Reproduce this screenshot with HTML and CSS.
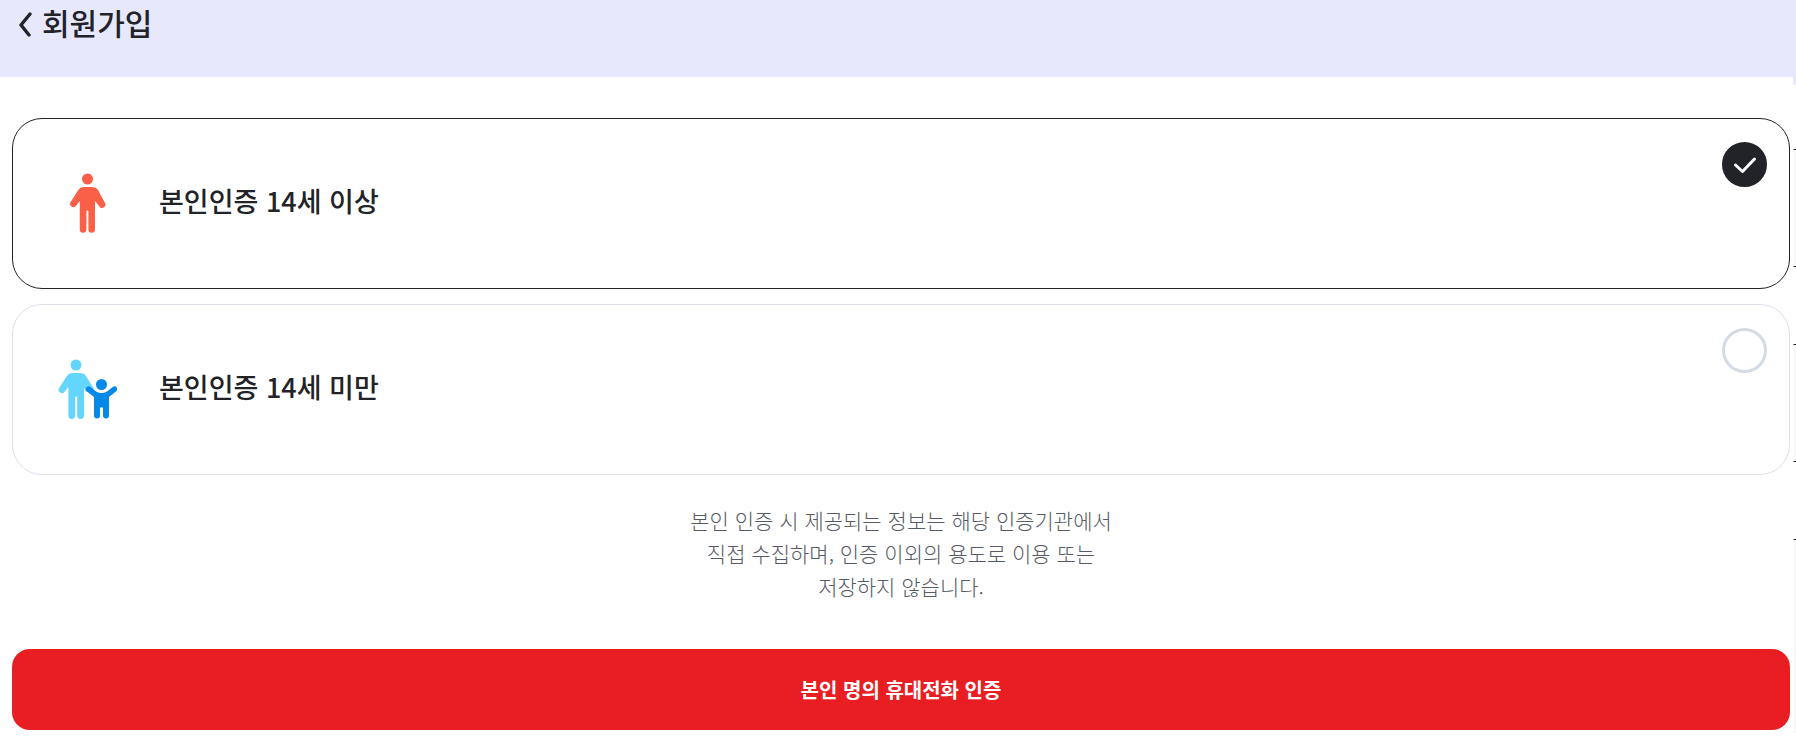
FILE: index.html
```html
<!DOCTYPE html>
<html lang="ko">
<head>
    <meta charset="UTF-8">
    <meta name="viewport" content="width=device-width, initial-scale=1.0">
    <title>회원가입</title>
    <link rel="stylesheet" href="styles.css">
</head>
<body>
    <div class="slider">
        <div class="screen">
            <header class="header">
                <button type="button" class="back" aria-label="뒤로">
                    <svg width="14" height="26" viewBox="0 0 14 26" fill="none" stroke="#222328" stroke-width="3.4" stroke-linecap="round" stroke-linejoin="round">
                        <path d="M12 3 L3 14 L11 24"/>
                    </svg>
                </button>
                <h1>회원가입</h1>
            </header>

            <form class="content">
                <label class="card">
                    <svg class="icon" width="60" height="60" viewBox="0 0 60 60" fill="#fa6047">
                        <circle cx="30.5" cy="6" r="5.5"/>
                        <path d="M26 14h9q4 0 6 3l7 13a3.3 3.3 0 0 1-6 3l-4-5v28.500a3.300 3.300 0 0 1-6.600 0V38.500q0-1-1-1t-1 1v18a3.300 3.300 0 0 1-6.600 0V28l-4 5a3.300 3.300 0 0 1-5.500-3.500l8-12.500q2-3 4.700-3z"/>
                    </svg>
                    <span class="card-title">본인인증 14세 이상</span>
                    <input type="radio" name="age" value="over" checked>
                </label>

                <label class="card">
                    <svg class="icon" width="60" height="60" viewBox="0 0 60 60">
                        <g fill="#64d5fd">
                            <circle cx="19" cy="6" r="5.500"/>
                            <path d="M15 14h8q4 0 6 3l8 13-8 3-2-4v27.500a3.400 3.400 0 0 1-6.800 0V38.500q0-1-1-1t-1 1v18a3.400 3.400 0 0 1-6.800 0V28l-4 5a3.300 3.300 0 0 1-5.500-3.500l8-12.500q2-3 5.100-3z"/>
                        </g>
                        <g fill="#0489e8">
                            <circle cx="44.500" cy="25.500" r="5.500"/>
                            <path d="M33.500 28l5.500 4.500q5.500 3 11 0l6.500-5a2.800 2.800 0 0 1 3 4.500l-7.500 6v18.500a3 3 0 0 1-6 0V48.500h-3v8a3 3 0 0 1-6 0V38l-7-5.500a2.800 2.800 0 0 1 3.500-4.500z"/>
                        </g>
                    </svg>
                    <span class="card-title">본인인증 14세 미만</span>
                    <input type="radio" name="age" value="under">
                </label>

                <p class="notice">
                    본인 인증 시 제공되는 정보는 해당 인증기관에서<br>
                    직접 수집하며, 인증 이외의 용도로 이용 또는<br>
                    저장하지 않습니다.
                </p>

                <button type="button" class="submit">본인 명의 휴대전화 인증</button>
            </form>
        </div>

        <!-- edge of the next screen -->
        <div class="next" aria-hidden="true">
            <div class="next-header"></div>
            <div class="next-box"></div>
            <div class="next-box"></div>
            <div class="next-box next-box-last"></div>
        </div>
    </div>
</body>
</html>
```
FILE: styles.css
```css
* {
    box-sizing: border-box;
}
body {
    margin: 0;
    background-color: #fff;
    color: #222328;
    font-family: "Noto Sans CJK KR", sans-serif;
}
.slider {
    display: grid;
    grid-template-columns: 1fr 3px;
}
.header {
    display: flex;
    align-items: flex-start;
    gap: 10px;
    height: 77px;
    padding: 2px 18px;
    background-color: #e8e8fd;
}
.back {
    display: flex;
    padding: 9px 0 0;
    border: none;
    background: none;
    cursor: pointer;
}
h1 {
    margin: 0;
    font-size: 30px;
    font-weight: 500;
    line-height: 40px;
}
.content {
    display: flex;
    flex-direction: column;
    gap: 15px;
    padding: 41px 3px 22px 12px;
}
.card {
    display: flex;
    align-items: center;
    gap: 42px;
    height: 171px;
    padding: 23px 22px 25px 44px;
    border: 1px solid #dce0e9;
    border-radius: 30px;
    cursor: pointer;
}
.card:has(input:checked) {
    border-color: #222328;
}
.card-title {
    flex: 1;
    padding-bottom: 4px;
    font-size: 27px;
    font-weight: 500;
    line-height: 36px;
}
.card input {
    appearance: none;
    align-self: flex-start;
    width: 45px;
    height: 45px;
    margin: 0;
    border: 3px solid #d5dbe4;
    border-radius: 50%;
    cursor: pointer;
}
.card input:checked {
    border-color: #222328;
    background: #222328 url("data:image/svg+xml,%3Csvg xmlns='http://www.w3.org/2000/svg' viewBox='0 0 39 39' fill='none' stroke='white' stroke-width='3' stroke-linecap='round' stroke-linejoin='round'%3E%3Cpath d='M10.500 20 L17.500 26.500 L29.500 14'/%3E%3C/svg%3E") center / 39px 39px no-repeat;
}
.notice {
    margin: 14px 0 31px;
    color: #555a64;
    font-size: 21px;
    font-weight: 300;
    line-height: 33px;
    text-align: center;
}
.submit {
    height: 81px;
    border: none;
    border-radius: 18px;
    background-color: #e91e23;
    color: #fff;
    font-family: inherit;
    font-size: 20px;
    font-weight: 700;
    cursor: pointer;
}
.next {
    display: flex;
    flex-direction: column;
    overflow: hidden;
}
.next-header {
    height: 85px;
    margin-bottom: 64px;
    background-color: #e8e8fd;
}
.next-box {
    height: 118px;
    margin-bottom: 77px;
    border: 1px solid #222328;
    border-width: 1px 0 1px 1px;
    border-color: #222328 transparent #222328 #f8f8f8;
    background-color: #f8f8f8;
}
.next-box-last {
    height: 194px;
    margin-bottom: 0;
    border-bottom: none;
}
```
